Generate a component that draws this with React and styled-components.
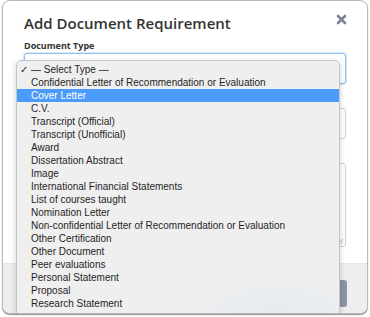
import React from "react";
import styled, { createGlobalStyle } from "styled-components";

const GlobalStyle = createGlobalStyle`
  html, body {
    margin: 0;
    padding: 0;
    background: #ffffff;
  }
  * {
    box-sizing: border-box;
  }
`;

const Page = styled.div`
  padding: 0 2px;
  width: 370px;
  height: 317px;
  overflow: hidden;
`;

const Modal = styled.div`
  position: relative;
  width: 366px;
  height: 314px;
  background: #ffffff;
  border: 1px solid #b9b9b9;
  border-radius: 8px;
  box-shadow: 0 1px 1px rgba(0, 0, 0, 0.45);
  overflow: hidden;
  display: flex;
  flex-direction: column;
  font-family: "Open Sans", "Liberation Sans", sans-serif;
  color: #333333;
`;

const Header = styled.div`
  display: flex;
  justify-content: space-between;
  align-items: flex-start;
  padding: 11px 20px 0 21px;
`;

const Title = styled.h2`
  margin: 0;
  font-size: 15px;
  line-height: 22px;
  font-weight: 600;
  color: #333333;
`;

const CloseBtn = styled.button`
  margin-top: 2px;
  padding: 0;
  border: 0;
  background: none;
  width: 11px;
  height: 11px;
  display: flex;
`;

const Body = styled.div`
  padding: 5px 21px 0;
  flex: 1;
`;

const Field = styled.div`
  margin-bottom: 10px;
`;

const Label = styled.div`
  height: 13px;
  font-size: 9px;
  line-height: 13px;
  font-weight: 700;
  margin-bottom: 1px;
  color: #333333;
`;

const InputBox = styled.div`
  height: ${(p) => (p.$tall ? "84px" : "31px")};
  border: 1px solid ${(p) => (p.$focus ? "#8cc3ee" : "#cfd3da")};
  border-radius: 3px;
  background: #ffffff;
  box-shadow: ${(p) => (p.$focus ? "0 0 0 1px rgba(140, 195, 238, 0.35)" : "none")};
  position: relative;
`;

const Grip = styled.svg`
  position: absolute;
  right: 2px;
  bottom: 2px;
`;

const Footer = styled.div`
  height: 50px;
  background: #eeeeee;
  border-top: 1px solid #e6e6e6;
  display: flex;
  justify-content: flex-end;
  padding: 16px 20px 0 0;
`;

const SaveBtn = styled.button`
  width: 84px;
  height: 27px;
  border: 0;
  border-radius: 3px;
  background: #8a94a5;
`;

const Menu = styled.ul`
  position: absolute;
  left: 13px;
  top: 59px;
  width: 324px;
  height: 262px;
  margin: 0;
  padding: 2px 0 0;
  list-style: none;
  background: radial-gradient(ellipse 110px 40px at 260px 250px, #e6ebf0 0%, #efefef 100%);
  border: 1px solid #c6c6c6;
  border-radius: 5px 5px 0 0;
  box-shadow: 0 2px 6px rgba(0, 0, 0, 0.18);
  font-family: "Liberation Sans", Arial, sans-serif;
  font-size: 10px;
`;

const Item = styled.li`
  display: flex;
  height: 13px;
  line-height: 13px;
  color: ${(p) => (p.$active ? "#ffffff" : "#1f1f1f")};
  background: ${(p) => (p.$active ? "#4b9bfa" : "transparent")};
  white-space: nowrap;
`;

const Check = styled.span`
  width: 14px;
  padding-left: 3px;
  font-size: 10px;
`;

const options = [
  "— Select Type —",
  "Confidential Letter of Recommendation or Evaluation",
  "Cover Letter",
  "C.V.",
  "Transcript (Official)",
  "Transcript (Unofficial)",
  "Award",
  "Dissertation Abstract",
  "Image",
  "International Financial Statements",
  "List of courses taught",
  "Nomination Letter",
  "Non-confidential Letter of Recommendation or Evaluation",
  "Other Certification",
  "Other Document",
  "Peer evaluations",
  "Personal Statement",
  "Proposal",
  "Research Statement",
];

export default function App() {
  return (
    <>
      <GlobalStyle />
      <Page>
        <Modal>
          <Header>
            <Title>Add Document Requirement</Title>
            <CloseBtn aria-label="Close">
              <svg width="11" height="11" viewBox="0 0 11 11">
                <path
                  d="M2 2 L9 9 M9 2 L2 9"
                  stroke="#7c8493"
                  strokeWidth="2.6"
                  strokeLinecap="round"
                />
              </svg>
            </CloseBtn>
          </Header>
          <Body>
            <Field>
              <Label>Document Type</Label>
              <InputBox $focus />
            </Field>
            <Field>
              <Label />
              <InputBox />
            </Field>
            <Field>
              <Label />
              <InputBox $tall>
                <Grip width="6" height="6" viewBox="0 0 6 6">
                  <path d="M1 6 L6 1 M3.5 6 L6 3.5" stroke="#9a9a9a" strokeWidth="0.8" />
                </Grip>
              </InputBox>
            </Field>
          </Body>
          <Footer>
            <SaveBtn />
          </Footer>
          <Menu>
            {options.map((o, i) => (
              <Item key={o} $active={i === 2}>
                <Check>{i === 0 ? "✓" : ""}</Check>
                {o}
              </Item>
            ))}
          </Menu>
        </Modal>
      </Page>
    </>
  );
}
